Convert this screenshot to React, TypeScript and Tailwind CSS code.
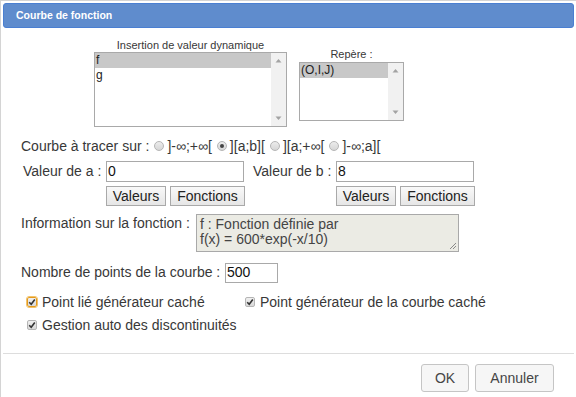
import React from "react";

function ListBox({
  items,
  width,
  height,
}: {
  items: string[];
  width: string;
  height: string;
}) {
  return (
    <div className={`flex border border-[#a9a9a9] bg-white ${width} ${height}`}>
      <ul className="flex-1 text-[12px] leading-[15px] text-[#222]">
        {items.map((it, i) => (
          <li key={it} className={`pl-[1px] ${i === 0 ? "bg-[#c8c8c8]" : ""}`}>
            {it}
          </li>
        ))}
      </ul>
      <div className="flex w-[15px] flex-col justify-between bg-[#f1f1f1] py-[5px]">
        <svg width="15" height="5" viewBox="0 0 15 5">
          <path d="M4.5 4.5 L7.5 1 L10.5 4.5 Z" fill="#a3a3a3" />
        </svg>
        <svg width="15" height="5" viewBox="0 0 15 5">
          <path d="M4.5 0.5 L7.5 4 L10.5 0.5 Z" fill="#a3a3a3" />
        </svg>
      </div>
    </div>
  );
}

function Radio({ checked, label }: { checked?: boolean; label: string }) {
  return (
    <span className="inline-flex items-center">
      <span className="ml-[5px] mr-[3px] flex h-[10px] w-[10px] items-center justify-center rounded-full border border-[#b5b5b5] bg-gradient-to-b from-[#ececec] to-[#d6d6d6]">
        {checked && <span className="h-[4px] w-[4px] rounded-full bg-[#444]" />}
      </span>
      {label}
    </span>
  );
}

function Check({ label, focus }: { label: string; focus?: boolean }) {
  return (
    <span className="inline-flex items-center">
      <span
        className={`mr-[5px] flex h-[10px] w-[10px] items-center justify-center rounded-[2px] border bg-gradient-to-b from-[#f0f0f0] to-[#d8d8d8] ${
          focus ? "border-[#e59a1c] outline outline-1 outline-[#f3c36b]" : "border-[#b5b5b5]"
        }`}
      >
        <svg width="8" height="8" viewBox="0 0 8 8">
          <path d="M1.2 4.2 L3.2 6.2 L6.8 1.4" stroke="#333" strokeWidth="1.6" fill="none" />
        </svg>
      </span>
      {label}
    </span>
  );
}

function SmallButton({ label, width }: { label: string; width: string }) {
  return (
    <button
      className={`h-[20px] ${width} border border-[#a9a9a9] bg-gradient-to-b from-[#f9f9f9] to-[#e6e6e6] text-[14px] leading-[18px] text-[#222]`}
    >
      {label}
    </button>
  );
}

function ValueField({ label, value }: { label: string; value: string }) {
  return (
    <div className="flex flex-col">
      <div className="flex items-center">
        <span className="w-[84px] pl-[1px]">{label}</span>
        <input
          readOnly
          value={value}
          className="h-[21px] w-[138px] border border-[#a9a9a9] px-[1px] text-[14px] text-[#111] outline-none"
        />
      </div>
      <div className="mt-[4px] flex gap-[4px] pl-[84px]">
        <SmallButton label="Valeurs" width="w-[60px]" />
        <SmallButton label="Fonctions" width="w-[75px]" />
      </div>
    </div>
  );
}

export default function App() {
  return (
    <div className="h-[397px] w-[576px] overflow-hidden border-l border-t border-[#d4d4d4] bg-white font-['Liberation_Sans',Arial,sans-serif] text-[14px] text-[#383838]">
      <div className="mx-[2px] mt-[2px] flex h-[25px] items-center rounded-[3px] border border-[#4a7fd2] bg-[#5f8ccd] pl-[12px] text-[10.5px] font-bold text-white">
        Courbe de fonction
      </div>

      <div className="flex pl-[93px]">
        <div className="mt-[11px] flex w-[193px] flex-col items-center">
          <span className="text-[11px] leading-[13px]">Insertion de valeur dynamique</span>
          <ListBox items={["f", "g"]} width="w-[193px]" height="h-[75px]" />
        </div>
        <div className="ml-[12px] mt-[20px] flex w-[105px] flex-col items-center">
          <span className="text-[11px] leading-[13px]">Repère :</span>
          <div className="mt-[1px]">
            <ListBox items={["(O,I,J)"]} width="w-[105px]" height="h-[59px]" />
          </div>
        </div>
      </div>

      <div className="mt-[11px] flex items-center pl-[20px] leading-[16px]">
        <span>Courbe à tracer sur :</span>
        <Radio label="]-∞;+∞[" />
        <Radio checked label="][a;b][" />
        <Radio label="][a;+∞[" />
        <Radio label="]-∞;a][" />
      </div>

      <div className="mt-[7px] flex gap-[7px] pl-[21px]">
        <ValueField label="Valeur de a :" value="0" />
        <ValueField label="Valeur de b :" value="8" />
      </div>

      <div className="mt-[8px] flex items-start pl-[20px]">
        <span className="mt-[1px] w-[175px] leading-[16px]">Information sur la fonction :</span>
        <div className="relative h-[38px] w-[263px] border border-[#a9a9a9] bg-[#ebebe4] px-[3px] pt-[2px] text-[14px] leading-[15px] text-[#444]">
          <div>f : Fonction définie par</div>
          <div>f(x) = 600*exp(-x/10)</div>
          <svg className="absolute bottom-[1px] right-[1px]" width="8" height="8" viewBox="0 0 8 8">
            <path d="M7 1 L1 7 M7 4 L4 7" stroke="#8a8a8a" strokeWidth="1" />
          </svg>
        </div>
      </div>

      <div className="mt-[10px] flex items-center pl-[20px]">
        <span className="w-[204px]">Nombre de points de la courbe :</span>
        <input
          readOnly
          value="500"
          className="h-[20px] w-[53px] border border-[#a9a9a9] px-[1px] text-[14px] text-[#111] outline-none"
        />
      </div>

      <div className="mt-[10px] flex pl-[26px] leading-[16px]">
        <div className="w-[218px]">
          <Check focus label="Point lié générateur caché" />
        </div>
        <Check label="Point générateur de la courbe caché" />
      </div>
      <div className="mt-[7px] flex pl-[26px] leading-[16px]">
        <Check label="Gestion auto des discontinuités" />
      </div>

      <div className="mx-[2px] mt-[20px] h-px bg-[#dddddd]" />

      <div className="flex justify-end gap-[6px] pr-[22px] pt-[10px]">
        <button className="h-[28px] w-[48px] rounded-[3px] border border-[#c5c5c5] bg-[#f6f6f6] text-[14px] text-[#454545]">
          OK
        </button>
        <button className="h-[28px] w-[79px] rounded-[3px] border border-[#c5c5c5] bg-[#f6f6f6] text-[14px] text-[#454545]">
          Annuler
        </button>
      </div>
    </div>
  );
}
